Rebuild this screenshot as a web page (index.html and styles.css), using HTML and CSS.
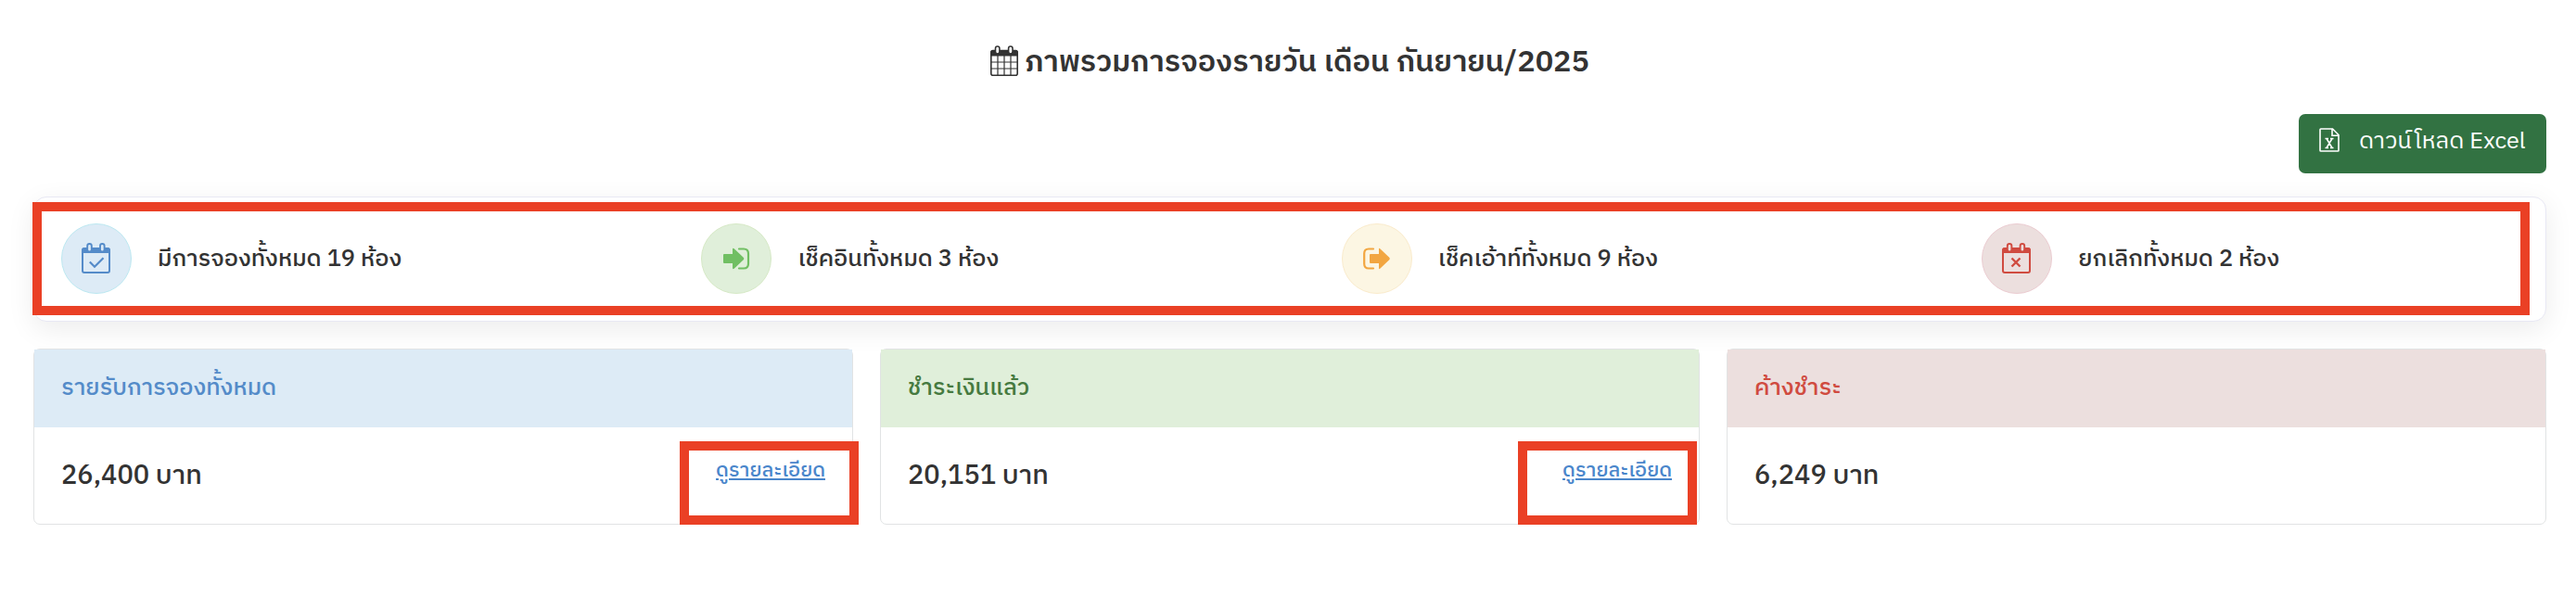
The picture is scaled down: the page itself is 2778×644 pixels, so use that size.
FILE: index.html
```html
<!DOCTYPE html>
<html lang="th">
<head>
  <meta charset="UTF-8" />
  <title>ภาพรวมการจองรายวัน</title>
  <link rel="stylesheet" href="styles.css">
</head>
<body>

  <h1 class="page-title">
    <svg class="title-icon" viewBox="0 0 30 33" fill="none" stroke="currentColor">
      <rect x="0.8" y="5.5" width="28.4" height="26.7" rx="2" stroke-width="1.6"/>
      <path d="M1 6H29V11H1Z" fill="currentColor"/>
      <path d="M8 11V32M15 11V32M22 11V32M1 18H29M1 25H29" stroke-width="1.2"/>
      <rect class="ring" x="5.5" y="1" width="4.4" height="8" rx="2.2" stroke-width="1.6"/>
      <rect class="ring" x="19.6" y="1" width="4.4" height="8" rx="2.2" stroke-width="1.6"/>
    </svg>
    <span class="title-text">ภาพรวมการจองรายวัน เดือน กันยายน/2025</span>
  </h1>

  <div class="toolbar">
    <button class="btn-excel">
      <svg class="excel-icon" viewBox="0 0 22 26" fill="none" stroke="currentColor">
        <path d="M1 1.8Q1 1 1.8 1H14.5L21 7.5V24.2Q21 25 20.2 25H1.8Q1 25 1 24.2ZM14 1V8.2H21" stroke-width="1.6"/>
        <path d="M6.5 11.5H10M12 11.5H15.5M6.5 21.5H10M12 21.5H15.5M8 11.5L14 21.5M14 11.5L8 21.5" stroke-width="1.5"/>
      </svg>
      <span class="btn-text">ดาวน์โหลด Excel</span>
    </button>
  </div>

  <!-- Booking counts -->
  <div class="stats">
    <div class="stat">
      <div class="circle blue">
        <svg class="cal-icon" viewBox="0 0 31 33" fill="none" stroke="currentColor">
          <rect x="1" y="6" width="29" height="26" rx="2" stroke-width="2"/>
          <path d="M1 6H30V10.5H1Z" fill="currentColor"/>
          <rect class="ring" x="6.2" y="1" width="4.6" height="8.5" rx="2.3" stroke-width="1.9"/>
          <rect class="ring" x="20" y="1" width="4.6" height="8.5" rx="2.3" stroke-width="1.9"/>
          <path d="M8.8 20.5L14 25.8L23.5 16.2" stroke-width="2.2"/>
        </svg>
      </div>
      <span class="stat-text">มีการจองทั้งหมด 19 ห้อง</span>
    </div>
    <div class="stat">
      <div class="circle green">
        <svg class="arrow-icon" viewBox="0 0 29 24">
          <path d="M1 7H10V2Q10 0 12 1.5L22 11Q22.6 12 22 13L12 22.5Q10 24 10 22V17H1Q0 17 0 16V8Q0 7 1 7Z" fill="currentColor"/>
          <path d="M17 1.5H22Q27 1.5 27 6.5V17.5Q27 22.5 22 22.5H17" fill="none" stroke="currentColor" stroke-width="2.2" stroke-linecap="round"/>
        </svg>
      </div>
      <span class="stat-text">เช็คอินทั้งหมด 3 ห้อง</span>
    </div>
    <div class="stat">
      <div class="circle yellow">
        <svg class="arrow-icon" viewBox="0 0 29 24">
          <path d="M8 7H17V2Q17 0 18.5 1.5L28.5 11Q29 12 28.5 13L18.5 22.5Q17 24 17 22V17H8Q7 17 7 16V8Q7 7 8 7Z" fill="currentColor"/>
          <path d="M11 1.5H6Q1.2 1.5 1.2 6.5V17.5Q1.2 22.5 6 22.5H11" fill="none" stroke="currentColor" stroke-width="2.2" stroke-linecap="round"/>
        </svg>
      </div>
      <span class="stat-text">เช็คเอ้าท์ทั้งหมด 9 ห้อง</span>
    </div>
    <div class="stat">
      <div class="circle red">
        <svg class="cal-icon" viewBox="0 0 31 33" fill="none" stroke="currentColor">
          <rect x="1" y="6" width="29" height="26" rx="2" stroke-width="2"/>
          <path d="M1 6H30V10.5H1Z" fill="currentColor"/>
          <rect class="ring" x="5.8" y="1" width="4.6" height="8.5" rx="2.3" stroke-width="1.9"/>
          <rect class="ring" x="19.6" y="1" width="4.6" height="8.5" rx="2.3" stroke-width="1.9"/>
          <path d="M10.5 16.5L19.5 25.5M19.5 16.5L10.5 25.5" stroke-width="2.4"/>
        </svg>
      </div>
      <span class="stat-text">ยกเลิกทั้งหมด 2 ห้อง</span>
    </div>
    <div class="mark mark-stats"></div>
  </div>

  <!-- Income panels -->
  <div class="panels">
    <div class="panel">
      <div class="panel-head blue">รายรับการจองทั้งหมด</div>
      <div class="panel-body">
        <span class="amount">26,400 บาท</span>
        <a class="detail" href="#">ดูรายละเอียด</a>
      </div>
      <div class="mark mark-income"></div>
    </div>
    <div class="panel">
      <div class="panel-head paid">ชำระเงินแล้ว</div>
      <div class="panel-body">
        <span class="amount">20,151 บาท</span>
        <a class="detail" href="#">ดูรายละเอียด</a>
      </div>
      <div class="mark mark-paid"></div>
    </div>
    <div class="panel">
      <div class="panel-head red">ค้างชำระ</div>
      <div class="panel-body">
        <span class="amount">6,249 บาท</span>
      </div>
    </div>
  </div>

</body>
</html>
```
FILE: styles.css
```css
* {
  box-sizing: border-box;
}

body {
  margin: 0;
  padding: 36px 32px 0 36px;
  background-color: #fff;
  color: #333;
  font-family: "IBM Plex Sans Thai", "Noto Sans Thai", "Noto Sans", sans-serif;
}

.page-title {
  display: flex;
  justify-content: center;
  align-items: center;
  gap: 7px;
  height: 59px;
  margin: 0;
  font-size: 32.4px;
  font-weight: 600;
  white-space: nowrap;
}

.title-text {
  padding-top: 4px;
}

.title-icon {
  width: 30px;
  height: 33px;
}

.toolbar {
  display: flex;
  justify-content: flex-end;
  margin-top: 28px;
}

.btn-excel {
  display: flex;
  align-items: flex-start;
  gap: 21px;
  width: 267px;
  height: 64px;
  padding: 15px 22px;
  border: none;
  border-radius: 7px;
  background-color: #327242;
  color: #fff;
  font-family: inherit;
  font-size: 25.2px;
  line-height: 30px;
  white-space: nowrap;
}

.excel-icon {
  flex: none;
  width: 22px;
  height: 26px;
}

.stats {
  position: relative;
  display: grid;
  grid-template-columns: repeat(4, 690.4px);
  height: 135px;
  margin-top: 25px;
  padding: 28px 0 0 29px;
  border: 1px solid #e8e8f4;
  border-radius: 14px;
  background-color: #fff;
  box-shadow: 0 8px 30px rgba(0, 0, 0, 0.08);
}

.stat {
  display: flex;
  align-items: center;
  gap: 28px;
  height: 76px;
  font-size: 25.3px;
  font-weight: 500;
  white-space: nowrap;
}

.stat-text {
  padding-top: 2px;
}

.circle {
  display: flex;
  align-items: center;
  justify-content: center;
  width: 76px;
  height: 76px;
  border: 1px solid #bce8f1;
  border-radius: 50%;
}

.blue {
  background-color: #ddebf6;
  color: #548bc9;
}

.green {
  border-color: #d6e9c6;
  background-color: #e0efda;
  color: #71bf63;
}

.yellow {
  border-color: #faebcc;
  background-color: #fcf6e3;
  color: #f2a641;
}

.red {
  border-color: #ebccd1;
  background-color: #ecdfde;
  color: #d04b40;
}

.paid {
  background-color: #e0efda;
  color: #467a40;
}

.cal-icon {
  width: 31px;
  height: 33px;
  margin: 0 2px 1px 0;
}

.ring {
  fill: #fff;
}

.blue .ring {
  fill: #ddebf6;
}

.red .ring {
  fill: #ecdfde;
}

.arrow-icon {
  width: 29px;
  height: 24px;
  margin-bottom: 1px;
}

.panels {
  display: grid;
  grid-template-columns: repeat(3, 1fr);
  gap: 29px;
  margin-top: 29px;
}

.panel {
  position: relative;
  height: 190px;
  border: 1px solid #e1e3e4;
  border-radius: 7px;
}

.panel-head {
  height: 84px;
  padding: 22px 29px;
  font-size: 25.3px;
  font-weight: 500;
  line-height: 40px;
}

.panel-body {
  display: flex;
  justify-content: space-between;
  padding: 25px 29px 0 29px;
}

.amount {
  font-size: 28.9px;
  font-weight: 500;
  line-height: 56px;
}

.detail {
  color: #4a86cb;
  font-size: 21.7px;
  font-weight: 500;
  line-height: 44px;
  text-decoration-thickness: 2px;
  text-underline-offset: 2px;
}

/* highlight frames */
.mark {
  position: absolute;
  border: 10px solid #ea4025;
}

.mark-stats {
  top: 5px;
  left: -2px;
  width: 2693px;
  height: 122px;
}

.mark-income {
  top: 99px;
  left: 696px;
  width: 193px;
  height: 90px;
}

.mark-paid {
  top: 99px;
  left: 687px;
  width: 193px;
  height: 90px;
}
```
